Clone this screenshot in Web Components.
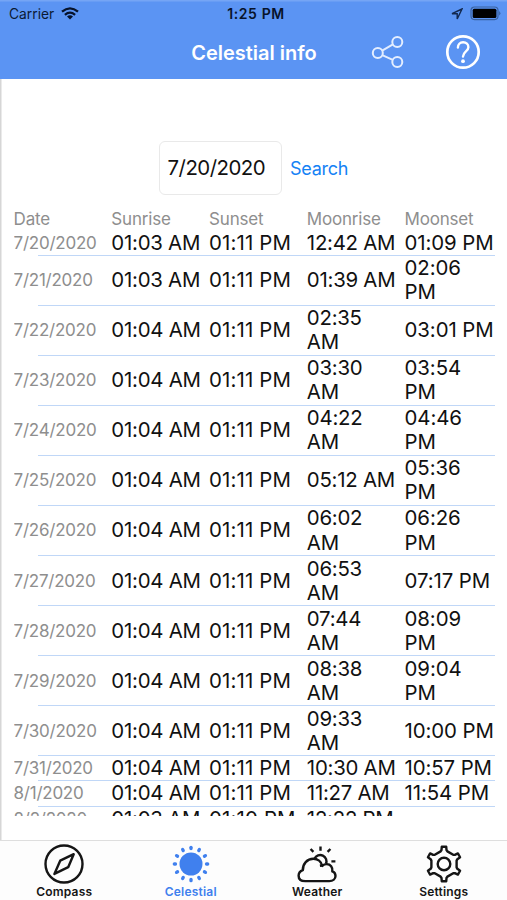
<!DOCTYPE html>
<html lang="en">
<head>
<meta charset="utf-8">
<title>Celestial info</title>
<style>
html,body{margin:0;height:100%;background:#fff;overflow:hidden}
</style>
</head>
<body>
<celestial-app></celestial-app>
<script>
const define = (name, html, after) => customElements.define(name, class extends HTMLElement {
  connectedCallback() {
    if (this.shadowRoot) return;
    const t = document.createElement('template');
    t.innerHTML = html;
    this.attachShadow({mode: 'open'}).append(t.content.cloneNode(true));
    if (after) after(this, this.shadowRoot);
  }
});

// Outline of a six-toothed gear centred on (20, 20).
const gearPath = () => {
  const tooth = [[-3.4, -12.6], [-2.5, -14], [-2.2, -17.3], [2.2, -17.3], [2.5, -14], [3.4, -12.6]];
  const points = [];
  for (let i = 0; i < 6; i++) {
    const a = i * Math.PI / 3, c = Math.cos(a), s = Math.sin(a);
    for (const [x, y] of tooth) points.push((20 + x * c - y * s).toFixed(2) + ' ' + (20 + x * s + y * c).toFixed(2));
  }
  return 'M' + points.join('L') + 'Z';
};

const ICONS = {
  compass: `<circle cx="20" cy="20" r="18.5"/><path d="M29.7 10.2 24.2 23.2 10.4 29.9 16.2 16.7Z" stroke-linejoin="round"/>`,
  sun: `<circle cx="20" cy="20" r="11.5" fill="currentColor" stroke="none"/><g stroke-width="3.3" stroke-linecap="round">${
    Array.from({length: 12}, (_, i) => `<path d="M20 3.3V4.5" transform="rotate(${i * 30} 20 20)"/>`).join('')}</g>`,
  weather: `<path d="M8.3 37.1H32.2C36 37.1 38.5 34.8 38.5 32C38.5 29.7 37.3 27.9 35.3 27.4C36 23.1 33.4 20.1 29.8 20.1C28.2 20.1 26.5 20.7 25.3 21.9C24.3 17.6 20.6 14.8 16.3 14.8C10.3 14.8 5.5 19.8 5.9 26.1C3.1 27.1 1.6 29.2 1.6 31.7C1.6 34.9 4 37.1 8.3 37.1Z" stroke-linejoin="round"/><path d="M17.6 14.6A6.1 6.1 0 1 1 28.9 19.8M23.5 2.6V6.8M13.6 5 16.4 7.8M33.4 5 30.6 7.8M34.4 17.4H38.4M22.9 21.8 25.6 21.4"/>`,
  gear: `<path d="${gearPath()}" stroke-linejoin="round"/><circle cx="20" cy="20" r="6.3"/>`
};

define('status-bar', `<style>
:host{display:grid;grid-template-columns:1fr auto 1fr;align-items:center;height:27px;padding:0 6px 0 9px;box-sizing:border-box;color:#0b1a33;font-size:13.8px}
.l,.r{display:flex;align-items:center}.l{gap:7px}.r{justify-content:flex-end;gap:7px}
.time{font-weight:600;font-size:14px;letter-spacing:.6px;color:#07132b;padding-left:2px}
svg{display:block}
</style>
<div class="l"><span>Carrier</span><svg width="18" height="13" viewBox="0 0 18 13" fill="none" stroke="#07132b" stroke-width="2.3"><path d="M1 4.7Q9-2 17 4.7M3.9 7.8Q9 3.5 14.1 7.8"/><path d="M9 12.6 6 9.4Q9 7 12 9.4Z" fill="#07132b" stroke="none"/></svg></div>
<span class="time">1:25 PM</span>
<div class="r"><svg width="12" height="12" viewBox="0 0 12 12" fill="none" stroke="#12284f" stroke-width="1.4"><path d="M11 1 1 5.7H6.2V11Z"/></svg>
<svg width="31" height="15" viewBox="0 0 31 15"><rect x="1" y="1" width="27" height="12.6" rx="3.5" fill="none" stroke="#3a629f" stroke-width="1.2"/><rect x="2.7" y="2.7" width="23.7" height="9.2" rx="1.5" fill="#000"/><path d="M29.2 5Q31.6 7.3 29.2 9.6Z" fill="#3a629f"/></svg></div>`);

define('nav-bar', `<style>
:host{display:grid;grid-template-columns:1fr auto 1fr;align-items:center;height:52px;color:#fff;box-sizing:border-box}
h1{margin:0;font-size:20px;font-weight:600;line-height:28px;padding-left:1px}
.actions{display:flex;align-items:center;justify-content:space-between;padding:0 26px 2px 53.5px}
svg{display:block}
</style><span></span><h1><slot></slot></h1>
<div class="actions"><svg width="36" height="36" viewBox="0 0 36 36" fill="none" stroke="#e4eeff" stroke-width="2"><circle cx="7.8" cy="19" r="5"/><circle cx="27.3" cy="8" r="5"/><circle cx="27.3" cy="28" r="5"/><path d="M12.2 16.6 22.9 10.4M12.2 21.2 22.8 25.8"/></svg>
<svg width="36" height="36" viewBox="0 0 36 36" fill="none" stroke="#fff"><circle cx="18" cy="18" r="15.7" stroke-width="2.7"/><path d="M12.9 13.6C12.9 10.4 15 8.3 18.1 8.3C21.2 8.3 23.4 10.4 23.4 13.2C23.4 17.4 18 17.4 18 22.6" stroke-width="2.4" stroke-linecap="round"/><circle cx="18" cy="27.2" r="1.9" fill="#fff" stroke="none"/></svg></div>`);

define('date-search', `<style>
:host{display:flex;align-items:center;padding:62px 0 0 159px;gap:8px}
.field{box-sizing:border-box;width:123px;height:54px;border:1px solid #e9e9e9;border-radius:6px;padding-left:7.5px;font-size:20.4px;line-height:51px;letter-spacing:-.5px;color:#111}
.btn{font-size:18px;line-height:24px;letter-spacing:-.25px;padding-top:2px;color:#1482f5}
</style><div class="field"><slot></slot></div><div class="btn">Search</div>`);

define('info-row', `<style>
:host{display:block;color:#111}
.g{display:grid;grid-template-columns:repeat(5,97.75px);align-items:center}
.g>*{font-size:20.4px;line-height:24.1px;letter-spacing:-.25px;white-space:pre}
.g>:nth-child(3){letter-spacing:.15px}
.g>:nth-child(5){letter-spacing:-.1px}
.g>.two{padding:.45px 0}
.g>:first-child{font-size:17px;letter-spacing:-.25px;color:#8e8e8e}
:host(:not([head]))::after{content:"";display:block;height:1px;margin-left:24.5px;background:#c0d7f7}
:host([head]) .g>*{font-size:17px;line-height:22.5px;letter-spacing:-.2px;color:#8e8e8e}
</style><div class="g"></div>`, (host, root) => {
  const g = root.querySelector('.g');
  for (const text of host.getAttribute('cells').split('|')) {
    if (!text) continue;
    const s = document.createElement('span');
    s.textContent = text.replace('_', '\n');
    if (text.includes('_')) s.className = 'two';
    g.append(s);
  }
});

define('info-table', `<style>
:host{display:block;box-sizing:border-box;height:608.5px;margin:12px 12.3px 0 13.6px;padding-top:1.1px;overflow:hidden}
</style><slot></slot>`);

define('tab-item', `<style>
:host{display:flex;flex-direction:column;align-items:center;width:126.5px;padding-top:3px;color:#151515;font-size:12px;font-weight:600;line-height:15px;letter-spacing:.2px}
:host([active]){color:#4080ee}
svg{display:block}
</style><svg width="40" height="40" viewBox="0 0 40 40" fill="none" stroke="currentColor" stroke-width="2.4"></svg><slot></slot>`,
(host, root) => { root.querySelector('svg').innerHTML = ICONS[host.getAttribute('icon')]; });

define('tab-bar', `<style>
:host{display:flex;box-sizing:border-box;height:60px;margin-top:auto;padding-left:1px;border-top:1px solid #dedede;background:#fdfdfd}
</style><slot></slot>`);

const ROWS = [
  '7/20/2020|01:03 AM|01:11 PM|12:42 AM|01:09 PM',
  '7/21/2020|01:03 AM|01:11 PM|01:39 AM|02:06_PM',
  '7/22/2020|01:04 AM|01:11 PM|02:35_AM|03:01 PM',
  '7/23/2020|01:04 AM|01:11 PM|03:30_AM|03:54_PM',
  '7/24/2020|01:04 AM|01:11 PM|04:22_AM|04:46_PM',
  '7/25/2020|01:04 AM|01:11 PM|05:12 AM|05:36_PM',
  '7/26/2020|01:04 AM|01:11 PM|06:02_AM|06:26_PM',
  '7/27/2020|01:04 AM|01:11 PM|06:53_AM|07:17 PM',
  '7/28/2020|01:04 AM|01:11 PM|07:44_AM|08:09_PM',
  '7/29/2020|01:04 AM|01:11 PM|08:38_AM|09:04_PM',
  '7/30/2020|01:04 AM|01:11 PM|09:33_AM|10:00 PM',
  '7/31/2020|01:04 AM|01:11 PM|10:30 AM|10:57 PM',
  '8/1/2020|01:04 AM|01:11 PM|11:27 AM|11:54 PM',
  '8/2/2020|01:03 AM|01:10 PM|12:22 PM|'
];

define('celestial-app', `<style>
:host{display:flex;flex-direction:column;width:507px;height:900px;box-sizing:border-box;background:#fff;font-family:Inter,"Liberation Sans",sans-serif;overflow:hidden}
header{background:linear-gradient(#75a5f5 1px,#5b94f3 2px);height:79px}
main{flex:1;display:flex;flex-direction:column;box-shadow:inset 1.5px 0 #d6d6d6}
</style>
<header><status-bar></status-bar><nav-bar>Celestial info</nav-bar></header>
<main><date-search>7/20/2020</date-search>
<info-table><info-row head cells="Date|Sunrise|Sunset|Moonrise|Moonset"></info-row>${ROWS.map(r => `<info-row cells="${r}"></info-row>`).join('')}</info-table>
<tab-bar><tab-item icon="compass">Compass</tab-item><tab-item icon="sun" active>Celestial</tab-item><tab-item icon="weather">Weather</tab-item><tab-item icon="gear">Settings</tab-item></tab-bar></main>`);
</script>
</body>
</html>
